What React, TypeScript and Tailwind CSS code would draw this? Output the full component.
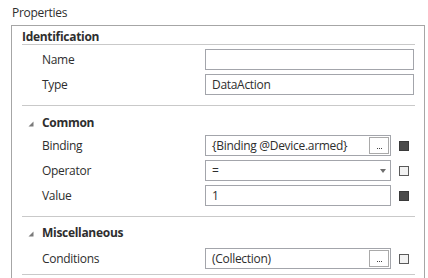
import React from "react";

const Sep = ({ cls = "" }: { cls?: string }) => (
  <div className={"ml-[10px] mr-[9px] h-px bg-[#c9c9c9] " + cls} />
);

const Tri = () => (
  <svg width="6" height="6" viewBox="0 0 6 6" className="block">
    <polygon points="5.5,0.5 5.5,5.5 0.5,5.5" fill="#7a7a7a" />
  </svg>
);

const Square = ({ filled }: { filled: boolean }) => (
  <div
    className={
      "ml-[8px] w-[10px] h-[10px] border " +
      (filled ? "bg-[#4b4b4b] border-[#3a3a3a]" : "bg-[#f2f2f2] border-[#5a5a5a]")
    }
  />
);

const Dots = () => (
  <div className="ml-auto w-[20px] border border-[#a9a9a9] bg-white flex items-end justify-center pb-[4px] gap-[1px]">
    <div className="w-[1px] h-[1px] bg-[#444]" />
    <div className="w-[1px] h-[1px] bg-[#444]" />
    <div className="w-[1px] h-[1px] bg-[#444]" />
  </div>
);

const Row = ({ label, children }: { label: string; children: React.ReactNode }) => (
  <div className="flex items-center h-[25px]">
    <div className="w-[193px] pl-[30px] leading-[15px]">{label}</div>
    {children}
  </div>
);

const Box = ({
  w,
  text,
  button,
  arrow,
}: {
  w: string;
  text?: string;
  button?: boolean;
  arrow?: boolean;
}) => (
  <div className={"h-[21px] border border-[#a3a5ab] bg-white flex items-stretch " + w}>
    <div className="pl-[6px] flex items-center leading-[15px] whitespace-nowrap">{text}</div>
    {button && (
      <div className="ml-auto flex py-[1px] pr-[1px]">
        <Dots />
      </div>
    )}
    {arrow && (
      <div className="ml-auto pr-[4px] flex items-center">
        <svg width="6" height="4" viewBox="0 0 6 4" className="block">
          <polygon points="0,0 6,0 3,4" fill="#6e6e6e" />
        </svg>
      </div>
    )}
  </div>
);

export default function App() {
  return (
    <div className="w-[428px] h-[278px] bg-white overflow-hidden font-['Open_Sans',sans-serif] text-[12px] tracking-[-0.3px] text-[#2e2e2e]">
      <div className="h-[25px] pl-[12px] pt-[5px] leading-[16px]">Properties</div>
      <div className="ml-[11px] w-[414px] h-[260px] border border-b-0 border-[#a6a6a6]">
        {/* Identification */}
        <div className="h-[18px] pl-[10px] pt-[3px] leading-[15px] font-bold">Identification</div>
        <Sep />
        <div className="h-[2px]" />
        <Row label="Name">
          <Box w="w-[209px]" />
        </Row>
        <Row label="Type">
          <Box w="w-[209px]" text="DataAction" />
        </Row>
        <Sep cls="mt-[8px]" />

        {/* Common */}
        <div className="h-[27px] pl-[16px] pt-[9px] flex items-start">
          <div className="mt-[6px] w-[14px]">
            <Tri />
          </div>
          <div className="leading-[15px] font-bold">Common</div>
        </div>
        <Row label="Binding">
          <Box w="w-[186px]" text="{Binding @Device.armed}" button />
          <Square filled />
        </Row>
        <Row label="Operator">
          <Box w="w-[186px]" text="=" arrow />
          <Square filled={false} />
        </Row>
        <Row label="Value">
          <Box w="w-[186px]" text="1" />
          <Square filled />
        </Row>
        <Sep cls="mt-[8px]" />

        {/* Miscellaneous */}
        <div className="h-[29px] pl-[16px] pt-[8px] flex items-start">
          <div className="mt-[6px] w-[14px]">
            <Tri />
          </div>
          <div className="leading-[15px] font-bold">Miscellaneous</div>
        </div>
        <Row label="Conditions">
          <Box w="w-[186px]" text="(Collection)" button />
          <Square filled={false} />
        </Row>
        <Sep cls="mt-[3px]" />
      </div>
    </div>
  );
}
